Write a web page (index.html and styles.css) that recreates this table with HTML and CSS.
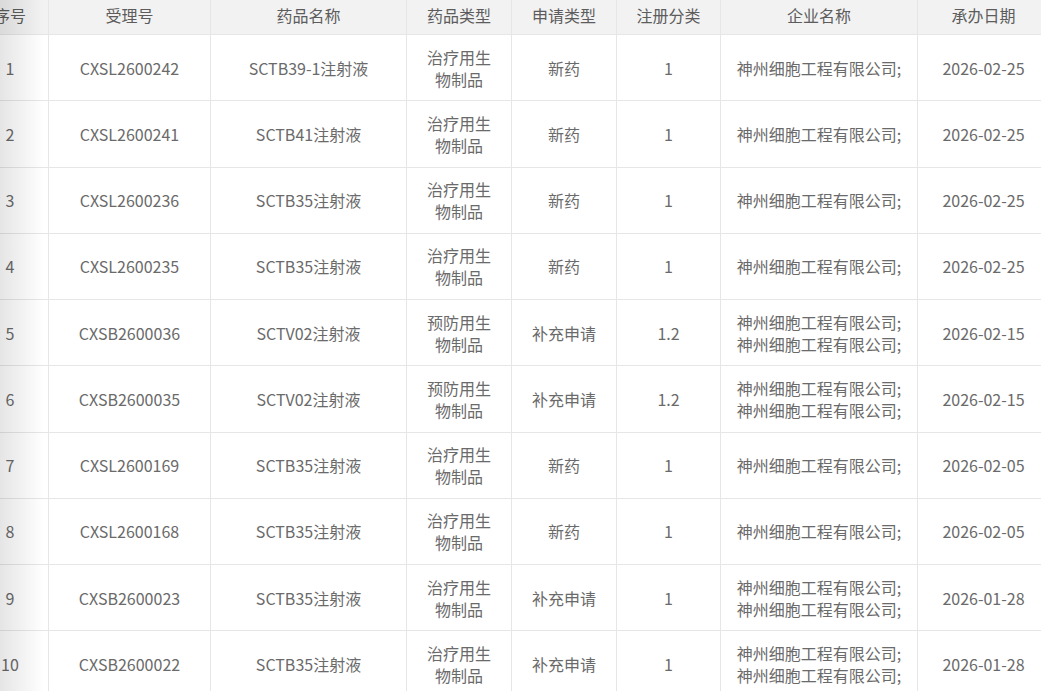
FILE: index.html
```html
<!DOCTYPE html>
<html lang="zh">
<head>
<meta charset="utf-8">
<link rel="stylesheet" href="styles.css">
</head>
<body>
<div class="wrap">
  <table class="grid">
    <colgroup>
      <col class="c1"><col class="c2"><col class="c3"><col class="c4"><col class="c5"><col class="c6"><col class="c7"><col class="c8">
    </colgroup>
    <thead>
      <tr><th>序号</th><th>受理号</th><th>药品名称</th><th>药品类型</th><th>申请类型</th><th>注册分类</th><th>企业名称</th><th>承办日期</th></tr>
    </thead>
    <tbody>
      <tr><td>1</td><td>CXSL2600242</td><td>SCTB39-1注射液</td><td>治疗用生<br>物制品</td><td>新药</td><td>1</td><td>神州细胞工程有限公司;</td><td>2026-02-25</td></tr>
      <tr><td>2</td><td>CXSL2600241</td><td>SCTB41注射液</td><td>治疗用生<br>物制品</td><td>新药</td><td>1</td><td>神州细胞工程有限公司;</td><td>2026-02-25</td></tr>
      <tr><td>3</td><td>CXSL2600236</td><td>SCTB35注射液</td><td>治疗用生<br>物制品</td><td>新药</td><td>1</td><td>神州细胞工程有限公司;</td><td>2026-02-25</td></tr>
      <tr><td>4</td><td>CXSL2600235</td><td>SCTB35注射液</td><td>治疗用生<br>物制品</td><td>新药</td><td>1</td><td>神州细胞工程有限公司;</td><td>2026-02-25</td></tr>
      <tr><td>5</td><td>CXSB2600036</td><td>SCTV02注射液</td><td>预防用生<br>物制品</td><td>补充申请</td><td>1.2</td><td>神州细胞工程有限公司;<br>神州细胞工程有限公司;</td><td>2026-02-15</td></tr>
      <tr><td>6</td><td>CXSB2600035</td><td>SCTV02注射液</td><td>预防用生<br>物制品</td><td>补充申请</td><td>1.2</td><td>神州细胞工程有限公司;<br>神州细胞工程有限公司;</td><td>2026-02-15</td></tr>
      <tr><td>7</td><td>CXSL2600169</td><td>SCTB35注射液</td><td>治疗用生<br>物制品</td><td>新药</td><td>1</td><td>神州细胞工程有限公司;</td><td>2026-02-05</td></tr>
      <tr><td>8</td><td>CXSL2600168</td><td>SCTB35注射液</td><td>治疗用生<br>物制品</td><td>新药</td><td>1</td><td>神州细胞工程有限公司;</td><td>2026-02-05</td></tr>
      <tr><td>9</td><td>CXSB2600023</td><td>SCTB35注射液</td><td>治疗用生<br>物制品</td><td>补充申请</td><td>1</td><td>神州细胞工程有限公司;<br>神州细胞工程有限公司;</td><td>2026-01-28</td></tr>
      <tr><td>10</td><td>CXSB2600022</td><td>SCTB35注射液</td><td>治疗用生<br>物制品</td><td>补充申请</td><td>1</td><td>神州细胞工程有限公司;<br>神州细胞工程有限公司;</td><td>2026-01-28</td></tr>
    </tbody>
  </table>
  <div class="shade"></div>
</div>
</body>
</html>
```

FILE: styles.css
```css
html, body {
  margin: 0;
  padding: 0;
  background: #ffffff;
}
body {
  font-family: "Noto Sans CJK SC", "Noto Sans", sans-serif;
  color: #6a6a6a;
  font-size: 16px;
  overflow: hidden;
}
.wrap {
  position: relative;
  width: 1041px;
  height: 691px;
  overflow: hidden;
}
.grid {
  border-collapse: collapse;
  table-layout: fixed;
  margin-left: -29px;
  width: 1078px;
}
.c1 { width: 77px; }
.c2 { width: 162px; }
.c3 { width: 196px; }
.c4 { width: 105px; }
.c5 { width: 105px; }
.c6 { width: 104px; }
.c7 { width: 197px; }
.c8 { width: 132px; }
.grid th, .grid td {
  border: 1px solid #e6e6e6;
  text-align: center;
  padding: 0 2px;
  line-height: 22px;
}
.grid th {
  border-top: none;
  background: #f2f2f2;
  font-weight: normal;
  color: #5c5c5c;
  height: 30px;
  padding-bottom: 4px;
}
.grid td {
  height: 65.25px;
}
.shade {
  position: absolute;
  left: 0;
  top: 0;
  width: 44px;
  height: 100%;
  background: linear-gradient(to right, rgba(0,0,0,0.1), rgba(0,0,0,0));
  pointer-events: none;
}
```
